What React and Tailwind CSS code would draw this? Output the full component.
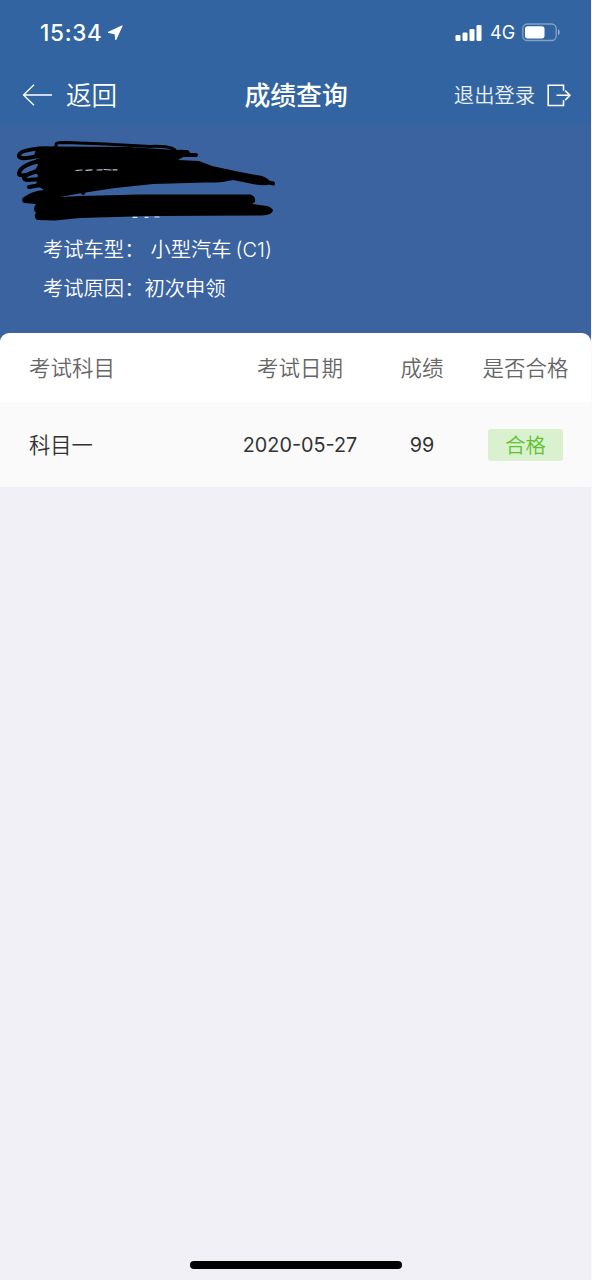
// Column layout shared by the table header and its rows.
const columns = "grid grid-cols-[211px_120px_124px_83px] items-center pl-[29px]";

const records = [
	{ subject: "科目一", date: "2020-05-27", score: 99, result: "合格" },
];

// Phone status bar: time, location arrow, signal, network and battery.
const StatusBar = () => (
	<div className="flex h-[65px] items-center justify-between pl-[40px] pr-[30px] text-white">
		<div className="flex items-center gap-[5px]">
			<span className="w-[62px] whitespace-nowrap pt-[2px] text-[22.5px] font-medium leading-none tracking-[0.7px]">15:34</span>
			<svg className="h-4 w-4" viewBox="0 0 16 16" fill="currentColor" stroke="currentColor" strokeWidth="1" strokeLinejoin="round">
				<path d="M15.200.8 8.800 14.800 8 8.800 1 7.400Z" />
			</svg>
		</div>
		<div className="flex items-center">
			<svg className="h-[18px] w-[28px]" viewBox="0 0 28 18" fill="currentColor">
				<rect x="0.5" y="11" width="5" height="6" rx="1.3" />
				<rect x="7.5" y="8.5" width="5" height="8.5" rx="1.3" />
				<rect x="14.5" y="5" width="5" height="12" rx="1.3" />
				<rect x="21.5" y="1" width="5" height="16" rx="1.3" />
			</svg>
			<span className="ml-[7px] w-[26px] pt-[1px] text-[18px] leading-none">4G</span>
			<svg className="ml-[6px] h-[19px] w-[39px]" viewBox="0 0 39 19">
				<rect x="0.8" y="1" width="33.4" height="16.5" rx="4.5" fill="none" stroke="white" strokeOpacity="0.4" strokeWidth="1.3" />
				<rect x="3" y="3.2" width="19.5" height="12.2" rx="2.6" fill="white" />
				<path d="M36 6.3c2.2 1 2.2 5 0 6Z" fill="white" fillOpacity="0.5" />
			</svg>
		</div>
	</div>
);

// Navigation bar with back, title and logout.
const NavBar = () => (
	<div className="grid h-[60px] grid-cols-[1fr_104px_1fr] items-center pl-[22px] pr-[20px] text-white">
		<button className="flex items-center gap-[14px] text-[25.6px] leading-none">
			<svg className="h-[24px] w-[30px]" viewBox="0 0 30 24" fill="none" stroke="currentColor" strokeWidth="1.3">
				<path d="M30 12H1.5M12 1.7 1.5 12 12 22.3" />
			</svg>
			<span className="pt-[2px] font-[350]">返回</span>
		</button>
		<h1 className="whitespace-nowrap pt-[2px] text-[25.8px] font-medium leading-none">成绩查询</h1>
		<button className="flex items-center justify-end gap-[12px] text-[20.3px] leading-none">
			<span className="pt-[2px] font-[350] text-white/90">退出登录</span>
			<svg className="h-[23px] w-[24px]" viewBox="0 0 24 23" fill="none" stroke="currentColor" strokeWidth="1.6">
				<path d="M16.5 6.7V1.2H1.2v20.3h15.3v-5.2M9.5 11.3h13M18.2 6.6l4.7 4.7-4.7 4.8" />
			</svg>
		</button>
	</div>
);

// Marker strokes covering the personal details.
const Redaction = () => (
	<svg className="block h-[105px] w-full" viewBox="0 0 591 105" fill="none" stroke="black" strokeLinecap="round" strokeLinejoin="round">
		<path d="M36 24 54 21.500 128 22 176 25Q190 24 190 28L178 35 199 36 212 41 240 47 262 51Q272 55 269 59Q266 62 248 58L233 55Q222 58 205 57.500L153 59 115 63 82 68 60 72 80 71 140 69.500 250 69.500Q256 71 255 77L252 79 267 81Q273 83 273 86Q271 90 262 90.500L150 91 80 93 55 95.500 37 95Q33 91 36 88Q32 84 36 79L24 78Q20 75 24 72Q32 66 44 65L36 60 38 50 34 47 38 40 36 34 49 31 34 31Z" fill="black" stroke="none" />
		<path d="M56 23V19.500C56 17.500 61 17.500 66 17.500L105 19 150 21.500C169 20.500 180 24 176 31Q174 35 164 36" strokeWidth="3" />
		<path d="M58 24C40 22 20 25 19 30S28 33 39 31L50 31M170 27H187M180 30H196" strokeWidth="4" />
		<path d="M40 36C25 39 20 44 19 48S28 51 40 44M40 46C26 48 20 54 27 55L42 54M29 62 58 57" strokeWidth="4" />
		<path d="M262 56 273 58.500" strokeWidth="4" />
		<path d="M83 68 85 64" strokeWidth="4" />
		<path d="M76 45.500 82 45M86 45.300 92 44.800M97 45 102 44.800M104 44.500 111 45M113 44.800H117" stroke="#b9c6d8" strokeWidth="1.200" />
		<path d="M133 92.300H137M145 92.300H148M155 92H159" stroke="#dce4ed" strokeWidth="1.200" />
	</svg>
);

const App = () => {
	return (
		<div className="min-h-screen w-full bg-[#f8f9fc] font-['Inter','Noto_Sans_CJK_SC',sans-serif]">
			<div className="flex h-[1280px] w-[591px] flex-col bg-[#f0f0f6]">
				<header className="bg-[#3164a0]">
					<StatusBar />
					<NavBar />
				</header>

				{/* Candidate details */}
				<section className="h-[208px] bg-[#3a63a0] text-[20.3px] font-[350] text-white">
					<Redaction />
					<div className="flex h-[38px] items-center pl-[43px] pt-[2px]">
						<span>考试车型：</span>
						<span className="ml-[6px]">小型汽车</span>
						<span className="ml-[4px] text-[20px]">(C1)</span>
					</div>
					<div className="flex h-[39px] items-center pl-[43px] pt-[3px]">
						<span>考试原因：</span>
						<span>初次申领</span>
					</div>
				</section>

				{/* Exam results */}
				<div className="bg-[#3a63a0]">
					<div className={`${columns} h-[69px] rounded-t-[9px] bg-white pt-[2px] text-[21.5px] font-[350] text-[#666666]`}>
						<span>考试科目</span>
						<span className="text-center">考试日期</span>
						<span className="text-center">成绩</span>
						<span className="-mx-2 text-center">是否合格</span>
					</div>
				</div>
				{records.map((record) => (
					<div key={record.subject} className={`${columns} h-[85px] bg-[#fafafa] text-[19.8px] text-[#333333]`}>
						<span className="pt-[2px] text-[21.3px] font-[350]">{record.subject}</span>
						<span className="whitespace-nowrap pt-[2px] text-center">{record.date}</span>
						<span className="pt-[2px] text-center">{record.score}</span>
						<span className="mx-auto flex h-[32px] w-[75px] items-center justify-center rounded-[3px] bg-[#d9f1cf] pt-[3px] text-[20.3px] font-[350] text-[#5fc22f]">
							{record.result}
						</span>
					</div>
				))}

				{/* Home indicator */}
				<div className="mb-[11px] ml-[190px] mt-auto h-[8px] w-[212px] rounded-full bg-black"></div>
			</div>
		</div>
	);
};

export default App;
